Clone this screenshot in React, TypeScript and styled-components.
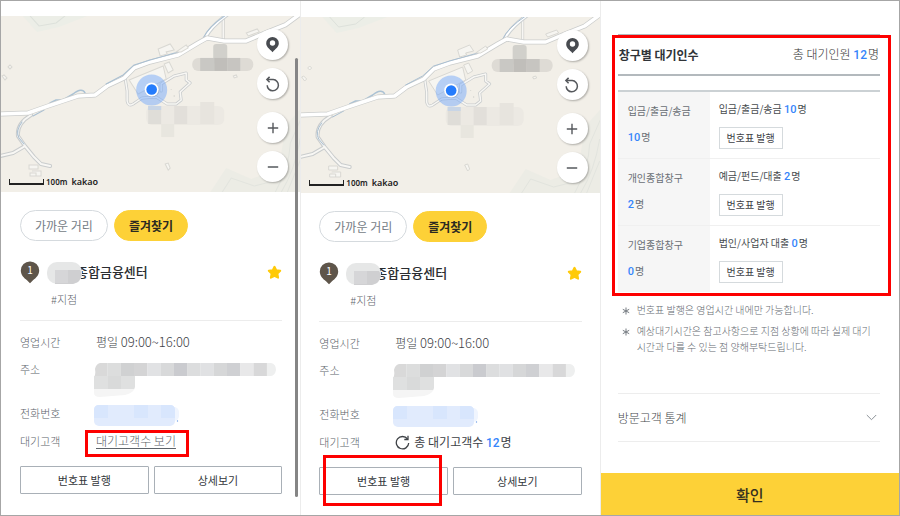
import React from "react";
import styled, { createGlobalStyle } from "styled-components";

const GlobalStyle = createGlobalStyle`
  * { box-sizing: border-box; }
  body {
    margin: 0;
    background: #fff;
    color: #333;
    font-family: "Noto Sans CJK KR", "Noto Sans", sans-serif;
    font-size: 12px;
    line-height: 16px;
    font-weight: 300;
  }
  button { font-family: inherit; cursor: pointer; margin: 0; padding: 0; }
  dl, dd, h2, p, ul { margin: 0; padding: 0; }
`;

const Frame = styled.main`
  display: grid;
  grid-template-columns: repeat(3, minmax(0, 1fr));
  min-height: 100vh;
  border: 1px solid #a6a6a6;
`;

const Panel = styled.section<{ $top: number; $divided?: boolean }>`
  position: relative;
  display: flex;
  flex-direction: column;
  padding-top: ${(p) => p.$top}px;
  border-left: ${(p) => (p.$divided ? "1px solid #ececec" : "0")};
`;

const Body = styled.div<{ $inset: number }>`
  padding: 18px 18px 0 ${(p) => p.$inset}px;
`;

const MapArea = styled.div`
  position: relative;
  height: 176px;
`;

const MapSvg = styled.svg`
  display: block;
  width: 100%;
  height: 100%;
`;

const MapControls = styled.div`
  position: absolute;
  top: 13px;
  right: 12px;
  display: flex;
  flex-direction: column;
  gap: 8px;
`;

const RoundButton = styled.button<{ $spaced?: boolean }>`
  display: grid;
  place-items: center;
  width: 31px;
  height: 31px;
  margin-top: ${(p) => (p.$spaced ? 5 : 0)}px;
  border: 0;
  border-radius: 50%;
  background: #fff;
  box-shadow: 1px 1px 2px rgba(0, 0, 0, 0.28);
`;

const MapLegend = styled.div`
  position: absolute;
  left: 8px;
  bottom: 3px;
  display: flex;
  align-items: center;
  line-height: 14px;
  color: #222;
`;

const ScaleBar = styled.span`
  width: 35px;
  height: 6px;
  margin-right: 2px;
  border: solid #222;
  border-width: 0 1px 2px;
`;

const ScaleText = styled.span`
  margin-right: 4px;
  font: 600 8px/14px "Noto Sans", sans-serif;
`;

const MapBrand = styled.span`
  font: 600 9px/14px "Noto Sans", sans-serif;
`;

const Chips = styled.div`
  display: flex;
  gap: 6px;
`;

const Chip = styled.button<{ $active?: boolean }>`
  height: 31px;
  padding: 0 14px;
  border: 1px solid ${(p) => (p.$active ? "#fdd137" : "#d5dade")};
  border-radius: 16px;
  background: ${(p) => (p.$active ? "#fdd137" : "#fff")};
  color: ${(p) => (p.$active ? "#2c2a22" : "#747c85")};
  font-size: 12px;
  font-weight: ${(p) => (p.$active ? 700 : 400)};
`;

const BranchHead = styled.div`
  display: flex;
  align-items: center;
  height: 24px;
  margin-top: 19px;
`;

const BranchName = styled.h2`
  position: relative;
  flex: 1;
  margin-left: 7px;
  padding-left: 29px;
  color: #2b2d30;
  font-size: 13px;
  line-height: 20px;
  font-weight: 500;
`;

const NameMask = styled.svg`
  position: absolute;
  left: 0;
  top: 0;
`;

const StarButton = styled.button`
  display: flex;
  border: 0;
  background: none;
`;

const Tag = styled.p`
  margin-top: 7px;
  padding: 0 0 13px 31px;
  border-bottom: 1px solid #ececec;
  color: #5f666d;
  font-size: 11px;
`;

const Details = styled.dl`
  display: grid;
  grid-template-columns: 76px minmax(0, 1fr);
  grid-template-rows: 27px 44px 28px 28px;
  padding-top: 13px;
`;

const Term = styled.dt`
  color: #5c636a;
  font-size: 11px;
`;

const Value = styled.dd`
  color: #3d4146;
`;

const Hours = styled.span`
  font-size: 13px;
`;

const Mask = styled.svg`
  display: block;
  margin-left: -2px;
  overflow: visible;
`;

const WaitLink = styled.a`
  position: relative;
  color: #5c6269;
  text-decoration: underline;
  text-underline-offset: 2px;
`;

const WaitCount = styled.p`
  display: flex;
  align-items: center;
  gap: 4px;
  font-weight: 400;
`;

const Blue = styled.strong<{ $size?: number }>`
  margin-right: 1px;
  color: #3585fb;
  font-family: Roboto, sans-serif;
  font-size: ${(p) => p.$size ?? 12}px;
  font-weight: 500;
`;

const Actions = styled.div`
  display: grid;
  grid-template-columns: 1fr 1fr;
  gap: 5px;
  margin-top: 5px;
`;

const OutlineButton = styled.button`
  position: relative;
  height: 28px;
  border: 1px solid #a9b0b7;
  border-radius: 1px;
  background: #fff;
  color: #33373b;
  font-size: 11px;
`;

const Highlight = styled.span<{ $inset: string }>`
  position: absolute;
  inset: ${(p) => p.$inset};
  border: 3px solid #fd0000;
  pointer-events: none;
`;

const ScrollThumb = styled.div`
  position: absolute;
  top: 57px;
  right: 2px;
  bottom: 18px;
  width: 3px;
  border-radius: 2px;
  background: #858585;
`;

const QueueSection = styled.div`
  position: relative;
  margin: 0 19px 0 17px;
`;

const QueueHead = styled.div`
  display: flex;
  align-items: center;
  justify-content: space-between;
  height: 42px;
  padding: 0 1px;
  border: solid #b3b9bd;
  border-width: 1px 0 2px;
`;

const QueueTitle = styled.h2`
  color: #303438;
  font-size: 12px;
  line-height: 16px;
  font-weight: 700;
`;

const QueueTable = styled.table`
  width: 100%;
  margin-top: 14px;
  border-collapse: collapse;
  border-top: 2px solid #cbd1d4;
  font-size: 10px;
  font-weight: 400;

  tr { height: 67px; border-bottom: 1px solid #f0f0f0; }
  tr:last-child { border-bottom: 0; }
`;

const QueueLabel = styled.th`
  width: 92px;
  padding: 0 0 0 10px;
  background: #f6f6f6;
  color: #6a6f75;
  font-weight: inherit;
  line-height: 26px;
  text-align: left;
`;

const QueueCell = styled.td`
  padding: 0 0 0 9px;
  color: #484c50;
`;

const QueueLine = styled.p`
  margin-bottom: 9px;
`;

const TicketButton = styled.button`
  display: block;
  width: 64px;
  height: 22px;
  border: 1px solid #d5dadd;
  background: #fff;
  color: #3d4146;
  font-size: 10px;
  font-weight: 400;
`;

const Notes = styled.ul`
  margin: 10px 24px 0 17px;
  padding: 0 0 0 19px;
  list-style: none;
  color: #656b71;
  font-size: 10px;

  li { position: relative; margin-bottom: 5px; }
`;

const NoteMark = styled.svg`
  position: absolute;
  left: -15px;
  top: 5px;
`;

const Accordion = styled.button`
  display: flex;
  align-items: center;
  justify-content: space-between;
  height: 49px;
  margin: 33px 19px 31px 17px;
  padding-right: 3px;
  border: solid #ededed;
  border-width: 1px 0;
  background: none;
  color: #45494d;
  font-size: 12px;
  font-weight: 300;
`;

const ConfirmButton = styled.button`
  flex: 1 0 42px;
  border: 0;
  background: #fdd137;
  color: #35301f;
  font-size: 15px;
  font-weight: 500;
`;

const mainRoad =
  "M0 114L28 113L48 106L78 96L95 95L107 86L124 78L134 68L150 62L178 55L198 43L207 38L224 41L246 41L265 33L285 25L300 14";
const sideRoad = "M31 115C21 121 17 128 18 136L25 146L34 157L41 164L50 166M25 146L13 153L0 156";
const loopRoad =
  "M125 78L127 91L127 101Q128 107 133 104L142 98L156 97L167 104L176 104L181 100L180 92L190 83L186 80L186 73L174 76L161 84L161 91";

function BranchMap() {
  return (
    <MapArea>
      <MapSvg viewBox="1 16 299 176" preserveAspectRatio="xMidYMid slice" role="img" aria-label="지점 위치 지도">
        <rect width="301" height="200" fill="#f2efe8" />
        <path d="M22 15L37 32L59 27L90 15Z" fill="#eceee7" />
        <path d="M30 16L39 26L56 23L65 16" fill="none" stroke="#dde1db" />
        <path d="M210 192L226 168L251 179L270 172L281 153L285 126L301 108V192Z" fill="#ecece5" />
        <g fill="none" stroke="#e2e4de">
          <path d="M222 192L231 178L254 186L270 182" />
          <path d="M275 192Q289 167 290 143L301 118" />
          <path d="M281 192Q295 169 300 138" />
          <path d="M287 192L300 160" />
        </g>
        <g fill="none" strokeLinejoin="round" strokeLinecap="round">
          <path d="M223 14V40" stroke="#d2d2cf" strokeWidth="3" />
          <path d="M223 14V40" stroke="#f7f6f3" strokeWidth="1.5" />
          <path d="M228 14Q210 27 205 38" stroke="#cbd0d2" strokeWidth="4" />
          <path d="M228 14Q210 27 205 38" stroke="#fff" strokeWidth="2" />
          <path d="M226 15Q208 27 203 38" stroke="#a9bfd2" />
          <path d="M50 103L56 100L63 100L73 94Q82 87 85 93" stroke="#abc2d4" strokeWidth="1.5" />
          <path d={sideRoad} stroke="#c9cccd" strokeWidth="4" />
          <path d={sideRoad} stroke="#f8f7f4" strokeWidth="2" />
          <path d="M33 116L44 110M22 122Q15 131 19 138L24 144" stroke="#a9bfd2" />
          <path d={loopRoad} stroke="#c9cccd" strokeWidth="3" />
          <path d={loopRoad} stroke="#f8f7f4" strokeWidth="1.5" />
          <path d={mainRoad} stroke="#cbcdcc" strokeWidth="5" />
          <path d={mainRoad} stroke="#fff" strokeWidth="3.5" />
          <path d="M106 84L123 75L134 65L150 60L178 52" stroke="#a9bfd2" />
        </g>
        <g fill="#f6f5f1" stroke="#d9d8d3">
          <path d="M129 80L163 66L166 79L138 94Z" />
          <path d="M158 49L170 44L174 50L166 52L167 54L160 56Z" />
          <path d="M164 64L169 62L173 70L168 73Z" />
          <path d="M176 52L186 45L188 48L181 52Z" />
          <path d="M246 33L257 29L259 32L248 36Z" />
          <path d="M29 165H38V169H29ZM32 171H41V176H30V173H36V176" />
          <path d="M2 76L4 75L7 78L5 80ZM8 67L10 65L12 67L10 69Z" />
          <path d="M165 164L168 163L170 168L168 170ZM233 76L236 75L237 77L234 78Z" />
          <path d="M171 89V90M174 95V97" />
        </g>
        <g>
          <rect x="192" y="58" width="61" height="13" rx="6" fill="#dedbd5" />
          <rect x="213" y="44" width="14" height="20" rx="3" fill="#d1d0cb" />
          <rect x="200" y="58" width="14" height="13" fill="#c9c8c4" />
          <rect x="214" y="58" width="13" height="13" fill="#c0beba" />
          <rect x="227" y="58" width="13" height="13" fill="#c7c5c1" />
        </g>
        <g>
          <rect x="146" y="106" width="78" height="19" rx="6" fill="#ece9e3" />
          <rect x="148" y="106" width="13" height="18" fill="#dfddd8" />
          <rect x="174" y="106" width="13" height="18" fill="#e2dfda" />
          <rect x="200" y="102" width="14" height="22" fill="#e7e4de" />
          <rect x="161" y="124" width="13" height="13" fill="#e8e6df" />
          <rect x="148" y="106" width="13" height="4" fill="#c8d5e6" />
        </g>
        <circle cx="151.5" cy="90" r="15.5" fill="#75a9f9" fillOpacity=".5" />
        <circle cx="152" cy="90" r="7.2" fill="#8395b0" fillOpacity=".5" />
        <circle cx="151.5" cy="89.5" r="7" fill="#fff" />
        <circle cx="151.5" cy="89.5" r="5.3" fill="#257cfc" />
      </MapSvg>
      <MapControls>
        <RoundButton aria-label="지점">
          <svg width="15" height="17" viewBox="0 0 15 17">
            <path d="M7.5 1A6.3 6.3 0 0 0 1.2 7.2C1.2 10.4 4 12.6 6 14.6L7.5 16.2L9 14.6C11 12.6 13.8 10.4 13.8 7.2A6.3 6.3 0 0 0 7.5 1Z" fill="#484b50" />
            <circle cx="7.5" cy="7" r="2.7" fill="#fff" />
          </svg>
        </RoundButton>
        <RoundButton aria-label="새로고침">
          <svg width="16" height="16" viewBox="0 0 16 16" fill="none" stroke="#55585c" strokeWidth="1.5">
            <path d="M2 3.6H8.2A5.6 5.6 0 1 1 2.2 9.2" />
            <path d="M4.6 .9L1.9 3.6L4.6 6.3" />
          </svg>
        </RoundButton>
        <RoundButton $spaced aria-label="확대">
          <svg width="12" height="12" viewBox="0 0 12 12" stroke="#55585c" strokeWidth="1.4">
            <path d="M6 .8V11.2M.8 6H11.2" />
          </svg>
        </RoundButton>
        <RoundButton aria-label="축소">
          <svg width="12" height="12" viewBox="0 0 12 12" stroke="#55585c" strokeWidth="1.5">
            <path d="M.8 6H11.2" />
          </svg>
        </RoundButton>
      </MapControls>
      <MapLegend>
        <ScaleBar />
        <ScaleText>100m</ScaleText>
        <MapBrand>kakao</MapBrand>
      </MapLegend>
    </MapArea>
  );
}

const addressTones = [
  "#d9d9d9", "#dcdddd", "#d0d1d2", "#d4d4d5", "#e1e2e4", "#d8d9da", "#cacbcf",
  "#dcddde", "#e0e1e3", "#d6d7d8", "#cfd0d3", "#e8e8e9", "#d8d8d9", "#eeefef",
];

function AddressMask({ id }: { id: string }) {
  return (
    <Mask width="183" height="36" viewBox="0 0 183 36" aria-hidden="true">
      <clipPath id={id}>
        <path d="M6 2H177Q182 3 182 9Q181 15 176 15H41V26Q40 32 31 34L6 36Q0 36 0 32V16Q2 14 1 8Q2 3 6 2Z" />
      </clipPath>
      <g clipPath={`url(#${id})`}>
        {addressTones.map((tone, i) => (
          <rect key={i} x={i * 13.3} y="2" width="13.4" height="14" fill={tone} />
        ))}
        <rect x="0" y="15" width="14" height="14" fill="#dfe0e0" />
        <rect x="14" y="15" width="13" height="14" fill="#d9dada" />
        <rect x="27" y="15" width="14" height="14" fill="#dfe0e0" />
        <rect x="0" y="28" width="41" height="9" fill="#f5f5f5" />
      </g>
    </Mask>
  );
}

function PhoneMask() {
  return (
    <Mask width="86" height="22" viewBox="0 0 86 22" aria-hidden="true">
      <rect x="74" y="2" width="11" height="14" rx="5" fill="#f0f5fe" />
      <rect x="0" y="0" width="81" height="21" rx="5" fill="#e1ebfd" />
      <path d="M5 0H14V13H0V5Q0 0 5 0ZM40 0H54V13H40ZM67 0H76Q81 0 81 5V13H67Z" fill="#d8e6fd" />
      <circle cx="83.5" cy="16" r=".7" fill="#6f9fe8" />
    </Mask>
  );
}

function BranchPanel({ id, top, divided, children, ticketMarked }: {
  id: string;
  top: number;
  divided?: boolean;
  ticketMarked?: boolean;
  children: React.ReactNode;
}) {
  return (
    <Panel $top={top} $divided={divided}>
      <BranchMap />
      <Body $inset={divided ? 18 : 19}>
        <Chips>
          <Chip>가까운 거리</Chip>
          <Chip $active>즐겨찾기</Chip>
        </Chips>
        <BranchHead>
          <svg width="20" height="23" viewBox="0 0 20 23" role="img" aria-label="1번 지점">
            <path d="M10 .5A9 9 0 0 0 .8 9.5C.8 14 4 17 7 19.2L10 22.2L13 19.2C16 17 19.2 14 19.2 9.5A9 9 0 0 0 10 .5Z" fill="#5e554a" />
            <text x="10" y="13" textAnchor="middle" fontSize="10" fontWeight="400" fill="#fff">1</text>
          </svg>
          <BranchName>
            종합금융센터
            <NameMask width="35" height="22" viewBox="0 0 35 22" aria-hidden="true">
              <rect x="0" y="0" width="35" height="22" rx="10" fill="#e6e7e7" />
              <path d="M8 8H33Q37 13 31 20L26 22H8Z" fill="#cfcfd1" />
              <path d="M8 8H21V21H8Z" fill="#d6d6d8" />
            </NameMask>
          </BranchName>
          <StarButton aria-label="즐겨찾기 지점">
            <svg width="15" height="15" viewBox="0 0 15 15">
              <path d="M7.5 1.8L9.2 5.2L13.2 5.8L10.4 8.6L11.1 12.7L7.5 10.8L3.9 12.7L4.6 8.6L1.8 5.8L5.8 5.2Z" fill="#ffca08" stroke="#ffca08" strokeWidth="2" strokeLinejoin="round" />
            </svg>
          </StarButton>
        </BranchHead>
        <Tag>#지점</Tag>
        <Details>
          <Term>영업시간</Term>
          <Value>평일 <Hours>09:00~16:00</Hours></Value>
          <Term>주소</Term>
          <Value><AddressMask id={id} /></Value>
          <Term>전화번호</Term>
          <Value><PhoneMask /></Value>
          <Term>대기고객</Term>
          <Value>{children}</Value>
        </Details>
        <Actions>
          <OutlineButton>
            번호표 발행
            {ticketMarked && <Highlight $inset="-13px 5px -12px 3px" />}
          </OutlineButton>
          <OutlineButton>상세보기</OutlineButton>
        </Actions>
      </Body>
      {!divided && <ScrollThumb />}
    </Panel>
  );
}

const queues = [
  { window: "입금/출금/송금", task: "입금/출금/송금", count: 10 },
  { window: "개인종합창구", task: "예금/펀드/대출", count: 2 },
  { window: "기업종합창구", task: "법인/사업자 대출", count: 0 },
];

const notes = [
  "번호표 발행은 영업시간 내에만 가능합니다.",
  "예상대기시간은 참고사항으로 지점 상황에 따라 실제 대기시간과 다를 수 있는 점 양해부탁드립니다.",
];

export default function App() {
  return (
    <>
      <GlobalStyle />
      <Frame>
        <BranchPanel id="address-first" top={15}>
          <WaitLink href="#wait">
            대기고객수 보기
            <Highlight $inset="-2px -13px -8px -11px" />
          </WaitLink>
        </BranchPanel>

        <BranchPanel id="address-second" top={16} divided ticketMarked>
          <WaitCount>
            <svg width="15" height="15" viewBox="0 0 15 15" fill="none" stroke="#3f4347" strokeWidth="1.3">
              <path d="M12.5 4A6.2 6.2 0 1 0 13.7 8" />
              <path d="M13 .8V4.5H9.3" />
            </svg>
            <span>총 대기고객수 <Blue>12</Blue>명</span>
          </WaitCount>
        </BranchPanel>

        <Panel $top={33} $divided>
          <QueueSection>
            <QueueHead>
              <QueueTitle>창구별 대기인수</QueueTitle>
              <span>총 대기인원 <Blue>12</Blue>명</span>
            </QueueHead>
            <QueueTable>
              <tbody>
                {queues.map((q) => (
                  <tr key={q.window}>
                    <QueueLabel scope="row">
                      {q.window}
                      <br />
                      <Blue $size={11}>{q.count}</Blue>명
                    </QueueLabel>
                    <QueueCell>
                      <QueueLine>{q.task} <Blue $size={11}>{q.count}</Blue>명</QueueLine>
                      <TicketButton>번호표 발행</TicketButton>
                    </QueueCell>
                  </tr>
                ))}
              </tbody>
            </QueueTable>
            <Highlight $inset="1px -11px -4px -6px" />
          </QueueSection>
          <Notes>
            {notes.map((note) => (
              <li key={note}>
                <NoteMark width="8" height="8" viewBox="0 0 8 8" stroke="#757b81" aria-hidden="true">
                  <path d="M4 .5V7.5M.8 2.3L7.2 5.7M.8 5.7L7.2 2.3" />
                </NoteMark>
                {note}
              </li>
            ))}
          </Notes>
          <Accordion aria-expanded="false">
            방문고객 통계
            <svg width="11" height="7" viewBox="0 0 11 7" fill="none" stroke="#8b9197">
              <path d="M.8 1L5.5 5.7L10.2 1" />
            </svg>
          </Accordion>
          <ConfirmButton>확인</ConfirmButton>
        </Panel>
      </Frame>
    </>
  );
}
